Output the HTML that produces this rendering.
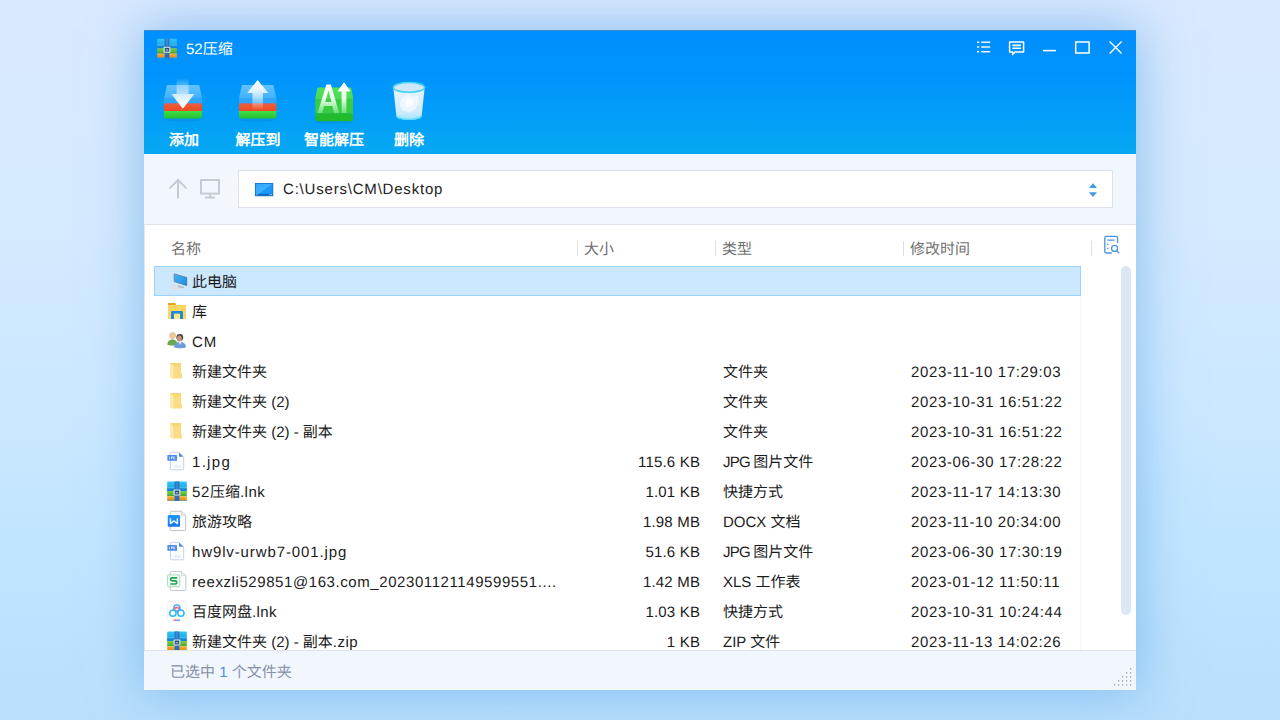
<!DOCTYPE html>
<html lang="zh-CN">
<head>
<meta charset="utf-8">
<title>52压缩</title>
<style>
*{box-sizing:border-box;margin:0;padding:0}
html,body{width:1280px;height:720px;overflow:hidden}
body{font-family:"Liberation Sans",sans-serif;font-size:15px;text-rendering:geometricPrecision;color:#1b1b1b;position:relative;
 background:linear-gradient(180deg,#d9e9fe 0%,#d5eafe 30%,#cbe8ff 55%,#c2e5ff 75%,#b9dffc 100%);}
.abs{position:absolute}
#shadow{position:absolute;left:144px;top:30px;width:992px;height:660px;
 box-shadow:0 0 48px 2px rgba(100,168,234,.66);}
#win{position:absolute;left:144px;top:30px;width:992px;height:660px;background:#fff;overflow:hidden}
#hdr{position:absolute;left:0;top:0;width:992px;height:124px;
 background:linear-gradient(180deg,#008fff 0%,#0093fd 35%,#03a0f6 75%,#06a8f3 100%);box-shadow:inset 0 1px 0 #3a86d0}
#title{position:absolute;left:42px;top:10px;color:#fff;font-size:15px;line-height:20px;white-space:nowrap}
.tb{position:absolute;top:103px;width:90px;text-align:center;color:#fff;font-size:15px;line-height:16px;font-weight:bold;white-space:nowrap}
#addr{position:absolute;left:0;top:124px;width:992px;height:71px;background:#f2f6fd;border-bottom:1px solid #dfe3ea}
#box{position:absolute;left:94px;top:16px;width:875px;height:38px;background:#fff;border:1px solid #dde1ea}
#path{position:absolute;left:44px;top:9px;font-size:15px;line-height:20px;color:#222;white-space:nowrap;letter-spacing:.8px}
#list{position:absolute;left:1px;box-shadow:-1px 0 0 #e3e7ee;top:195px;width:990px;height:426px;background:#fff;overflow:hidden}
.h{position:absolute;top:15px;color:#707070;font-size:15px;line-height:20px;white-space:nowrap}
.sep{position:absolute;top:16px;width:1px;height:15px;background:#e0e0e0}
.row{position:absolute;left:9px;width:927px;height:30px;white-space:nowrap}
.row.sel{background:#cce8ff;border:1px solid #99d1ff}
.n{position:absolute;left:38px;top:7px;line-height:20px;font-size:15px}
.s{position:absolute;right:381px;top:7px;line-height:20px;font-size:15px;text-align:right;letter-spacing:.2px;margin-right:-.2px}
.t{position:absolute;left:569px;top:7px;line-height:20px;font-size:15px}
.d{position:absolute;left:757px;top:7px;line-height:20px;font-size:15px;letter-spacing:.64px}
.sel .n{left:37px;top:6px}
.sel .ic{left:11px;top:3px}
.c{display:inline-block;white-space:nowrap;letter-spacing:0;text-align:justify;text-align-last:justify;text-justify:inter-character}
.ic{position:absolute;left:12px;top:4px;width:22px;height:22px}
#status{position:absolute;left:0;top:620px;width:992px;height:40px;background:#f2f6fd;border-top:1px solid #dfe3ec}
#status span.txt{position:absolute;left:26px;top:12px;font-size:15px;line-height:20px;color:#8491a9;white-space:nowrap}
#status b{font-weight:normal;color:#4a8fe0}
#sb{position:absolute;left:977px;top:236px;width:10px;height:349px;border-radius:5px;background:#dbe7f5}
</style>
</head>
<body>
<svg width="0" height="0" style="position:absolute">
 <defs>
  <linearGradient id="zTop" x1="0" y1="0" x2="0" y2="1"><stop offset="0" stop-color="#35c4f4"/><stop offset=".55" stop-color="#1fb0ea"/><stop offset="1" stop-color="#2a98dc"/></linearGradient>
  <linearGradient id="zGr" x1="0" y1="0" x2="0" y2="1"><stop offset="0" stop-color="#7ccf4a"/><stop offset="1" stop-color="#4aa52e"/></linearGradient>
  <linearGradient id="zOr" x1="0" y1="0" x2="0" y2="1"><stop offset="0" stop-color="#f6b540"/><stop offset="1" stop-color="#e58c12"/></linearGradient>
  <symbol id="zip" viewBox="0 0 20 20">
   <path d="M1.2 0.6h17.6a1 1 0 0 1 1 1V10H0.2V1.6a1 1 0 0 1 1-1z" fill="url(#zTop)"/>
   <rect x="0.2" y="6.4" width="19.6" height="1" fill="#6fd4f4" opacity=".7"/><rect x="0.2" y="7.4" width="19.6" height="2.6" fill="#1480d6" opacity=".88"/>
   <rect x="0.2" y="10" width="19.6" height="5.2" fill="url(#zGr)"/>
   <rect x="0.2" y="15.2" width="19.6" height="4" fill="url(#zOr)"/>
   <rect x="0.2" y="19" width="19.6" height="1" fill="#8f9a86"/>
   <rect x="7.6" y="0.6" width="4.8" height="19.4" fill="#2a6fba"/>
   <rect x="8.6" y="0.6" width="2.8" height="7" fill="#3b86d2"/>
   <rect x="6.6" y="8.4" width="6.8" height="6.2" rx="1" fill="#e9eef2"/>
   <rect x="7.7" y="9.5" width="4.6" height="4" fill="#24508a"/>
   <rect x="8.8" y="11.3" width="2.4" height="1" fill="#c9d6e6"/>
  </symbol>
 </defs>
</svg>
<div id="shadow"></div>
<div id="win">
 <div id="hdr">
  <svg class="abs" style="left:13px;top:8px" width="20" height="21" viewBox="0 0 20 21"><use href="#zip" width="20" height="20.5"/></svg>
  <div id="title">52<span class="c" style="width:30px">压缩</span></div>
  <svg class="abs" style="left:826px;top:6px" width="160" height="26" viewBox="970 36 160 26" fill="none" stroke="#fff" stroke-width="1.5">
   <path d="M977 42.2h2.2M981.2 42.2h9M977 47h2.2M981.2 47h9M977 51.8h2.2M981.2 51.8h9" stroke-width="1.5" opacity=".92"/>
   <path d="M1009.6 42h14v10h-8.6l-2.4 2.6v-2.6h-3z" stroke-linejoin="round"/>
   <path d="M1012.4 45.4h8.6M1012.4 48.2h8.6" stroke-width="1.6"/>
   <path d="M1043 50.6h13"/>
   <rect x="1075.7" y="42" width="13.4" height="11"/>
   <path d="M1109.6 41.6l12 12M1121.6 41.6l-12 12" stroke-width="1.4"/>
  </svg>
  <svg class="abs" style="left:0;top:40px" width="320" height="60" viewBox="144 70 320 60">
   <defs>
    <linearGradient id="lid" x1="0" y1="0" x2="0" y2="1"><stop offset="0" stop-color="#62c3ff"/><stop offset=".6" stop-color="#46b4ff"/><stop offset="1" stop-color="#2ea6fa"/></linearGradient>
    <linearGradient id="red" x1="0" y1="0" x2="0" y2="1"><stop offset="0" stop-color="#c46a70"/><stop offset=".28" stop-color="#f4562c"/><stop offset="1" stop-color="#ea4a28"/></linearGradient>
    <linearGradient id="grn" x1="0" y1="0" x2="0" y2="1"><stop offset="0" stop-color="#3ee045"/><stop offset="1" stop-color="#27bf30"/></linearGradient>
    <linearGradient id="arD" x1="0" y1="0" x2="0" y2="1"><stop offset="0" stop-color="#fff" stop-opacity="0"/><stop offset=".45" stop-color="#e6f5ff" stop-opacity=".6"/><stop offset="1" stop-color="#fff"/></linearGradient>
    <linearGradient id="arU" x1="0" y1="0" x2="0" y2="1"><stop offset="0" stop-color="#fff"/><stop offset=".5" stop-color="#eaf6ff" stop-opacity=".75"/><stop offset="1" stop-color="#fff" stop-opacity=".05"/></linearGradient>
    <linearGradient id="arH" x1="0" y1="0" x2="0" y2="1"><stop offset="0" stop-color="#d8eeff" stop-opacity=".78"/><stop offset=".65" stop-color="#f6fbff" stop-opacity=".97"/><stop offset="1" stop-color="#fff"/></linearGradient><linearGradient id="arH2" x1="0" y1="0" x2="0" y2="1"><stop offset="0" stop-color="#fff"/><stop offset=".5" stop-color="#f4faff" stop-opacity=".95"/><stop offset="1" stop-color="#dcf0ff" stop-opacity=".8"/></linearGradient><linearGradient id="gTop" x1="0" y1="0" x2="0" y2="1"><stop offset="0" stop-color="#52e05c"/><stop offset="1" stop-color="#3fd44a"/></linearGradient>
    <linearGradient id="aiA" x1="0" y1="0" x2="0" y2="1"><stop offset="0" stop-color="#fff"/><stop offset=".55" stop-color="#f4fff4" stop-opacity=".92"/><stop offset="1" stop-color="#d8ffd8" stop-opacity=".35"/></linearGradient>
    <linearGradient id="bin" x1="0" y1="0" x2="0" y2="1"><stop offset="0" stop-color="#f2f9ff" stop-opacity=".95"/><stop offset=".75" stop-color="#e2f1ff" stop-opacity=".92"/><stop offset="1" stop-color="#a6e9fb" stop-opacity=".97"/></linearGradient>
   </defs>
   <!-- add -->
   <ellipse cx="183" cy="119.5" rx="18" ry="2.2" fill="#0a6fd0" opacity=".25"/>
   <path d="M167 85h32.2l2.8 13v5.6h-38v-5.6z" fill="url(#lid)"/>
   <rect x="164" y="98" width="38" height="5.6" fill="#2fa6fb"/>
   <rect x="164" y="103.2" width="38" height="8" fill="url(#red)"/>
   <path d="M164 111h38v5.6a2 2 0 0 1-2 2h-34a2 2 0 0 1-2-2z" fill="url(#grn)"/>
   <path d="M176.6 78h12v16h5.6l-11.4 14.6l-11.2-14.6h5z" fill="url(#arD)"/>
   <path d="M171.6 94h22.6l-11.4 14.6z" fill="url(#arH)"/>
   <!-- extract -->
   <ellipse cx="257.6" cy="119.5" rx="18" ry="2.2" fill="#0a6fd0" opacity=".25"/>
   <path d="M242 85h31.4l2.9 13v5.6h-37.3v-5.6z" fill="url(#lid)"/>
   <rect x="239" y="98" width="37.3" height="5.6" fill="#2fa6fb"/>
   <rect x="239" y="103.2" width="37.3" height="8" fill="url(#red)"/>
   <path d="M239 111h37.3v5.6a2 2 0 0 1-2 2h-33.3a2 2 0 0 1-2-2z" fill="url(#grn)"/>
   <path d="M257.6 80.3l10.6 12.6h-5.2v16.4h-10.6v-16.4h-5.2z" fill="url(#arU)"/>
   <path d="M257.6 80.3l10.6 12.6h-20.8z" fill="url(#arH2)"/>
   <!-- AI -->
   <ellipse cx="334" cy="122" rx="18" ry="2.2" fill="#0a6fd0" opacity=".22"/>
   <path d="M319 87.6h30.6a2 2 0 0 1 1.9 1.4l1.5 8v16.6h-37.5v-16.6l1.6-8a2 2 0 0 1 1.9-1.4z" fill="url(#gTop)"/>
   <rect x="315.5" y="99" width="37.5" height="14.6" fill="#34c840" opacity=".75"/><path d="M315.5 113.4h37.5v5.8a2 2 0 0 1-2 2h-33.5a2 2 0 0 1-2-2z" fill="#22bb2b"/>
   <path d="M326.4 84.6h4.4l8.4 28.4h-5l-1.9-7h-8.2l-1.9 7h-4.6zM328.5 90.5l-3.2 11.4h6.2z" fill="url(#aiA)"/>
   <path d="M344 82.6l6.2 8.6h-3.8v21.8h-4.8v-21.8h-3.8z" fill="url(#aiA)"/>
   <path d="M344 82.6l6.2 8.6h-12.4z" fill="#fff"/>
   <!-- trash -->
   <path d="M393.4 88.2c0 3 31.2 3 31.2 0l-3 28.2c-.3 4.6-24.9 4.6-25.2 0z" fill="url(#bin)"/>
   <path d="M396.2 114.6c.6 5.4 24.6 5.4 25.2 0l-.2 2c-.5 4.4-24.3 4.4-24.8 0z" fill="#59dcf6"/>
   <path d="M401 99l7-4.5 5 2.5 4.5-1.5 2 7-4 6.5-6 3.5-7-2-2.5-6z" fill="#fff" opacity=".55"/>
   <path d="M405 101l5-3 4 3.6-2.6 5.4-5.4.6z" fill="#fff" opacity=".7"/>
   <ellipse cx="409" cy="87.4" rx="15.6" ry="4.9" fill="#cfe6fb" stroke="#3fd3f0" stroke-width="1.6"/>
  </svg>
  <div class="tb" style="left:-5px"><span class="c" style="width:30px">添加</span></div>
  <div class="tb" style="left:69px"><span class="c" style="width:45px">解压到</span></div>
  <div class="tb" style="left:145px"><span class="c" style="width:60px">智能解压</span></div>
  <div class="tb" style="left:220px"><span class="c" style="width:30px">删除</span></div>
 </div>
 <div id="addr">
  <svg class="abs" style="left:16px;top:16px" width="70" height="40" viewBox="160 170 70 40" fill="none" stroke="#c5cad3" stroke-width="2">
   <path d="M178 198.6v-18.2M169.6 188.4l8.4-8.4l8.4 8.4" stroke-linejoin="miter"/>
   <rect x="201" y="180" width="18" height="13.6"/>
   <path d="M210 193.6v3.6M205 197.6h10"/>
  </svg>
  <div id="box"><svg class="abs" style="left:15px;top:11px" width="20" height="16" viewBox="254 182 20 16">
    <defs><linearGradient id="drv" x1="0" y1="0" x2="1" y2="1"><stop offset="0" stop-color="#2aa4ff"/><stop offset=".5" stop-color="#3fb0ff"/><stop offset=".52" stop-color="#1e98fb"/><stop offset="1" stop-color="#1790f6"/></linearGradient></defs>
    <rect x="255.4" y="183.4" width="17.4" height="12.4" fill="url(#drv)" stroke="#0f6fc4" stroke-width=".9"/>
    <rect x="255.9" y="193.9" width="16.4" height="1.6" fill="#0d64b8"/>
    <rect x="256.6" y="194.2" width="1" height="1" fill="#d8ecff"/><rect x="269.4" y="194.2" width="1" height="1" fill="#d8ecff"/><rect x="271" y="194.2" width="1" height="1" fill="#d8ecff"/>
   </svg>
   <svg class="abs" style="left:848px;top:10px" width="12" height="18" viewBox="1087 181 12 18"><path d="M1089 188l4-4.8l4 4.8zM1089 192.2l4 4.8l4-4.8z" fill="#3c9bee"/></svg>
   <div id="path">C:\Users\CM\Desktop</div></div>
 </div>
 <div id="list">
  <div class="h" style="left:26px"><span class="c" style="width:30px">名称</span></div>
  <div class="h" style="left:439px"><span class="c" style="width:30px">大小</span></div>
  <div class="h" style="left:577px"><span class="c" style="width:30px">类型</span></div>
  <div class="h" style="left:765px"><span class="c" style="width:60px">修改时间</span></div>
  <svg class="abs" style="left:957px;top:9px" width="20" height="22" viewBox="1102 234 20 22" fill="none" stroke="#4a93de" stroke-width="1.3">
   <path d="M1117.6 243v-5a1.6 1.6 0 0 0-1.6-1.6h-9.6a1.6 1.6 0 0 0-1.6 1.6v13.4a1.6 1.6 0 0 0 1.6 1.6h5.4"/>
   <path d="M1107.4 240.2h7.2M1107 244.4h1.4M1107 248.4h1.4"/>
   <circle cx="1114.6" cy="248.4" r="3"/><path d="M1116.8 250.8l2.2 2.2"/>
  </svg>
  <div class="sep" style="left:432px"></div><div class="sep" style="left:570px"></div><div class="sep" style="left:758px"></div><div class="sep" style="left:946px"></div>
  <div class="abs" style="left:935px;top:41px;width:1px;height:390px;background:#f5f6f9"></div>
  <div class="row sel" style="top:41px"><svg class="ic" viewBox="0 0 22 22"><defs><linearGradient id="pcg" x1="0" y1="0" x2="1" y2="1"><stop offset="0" stop-color="#4ab4f8"/><stop offset=".5" stop-color="#2ea2f4"/><stop offset="1" stop-color="#1488e4"/></linearGradient></defs>
   <path d="M1.2 16.9l6-1.5l8.6 3.1l-5.8 1.9z" fill="#dcdfe3"/>
   <path d="M11.6 15.2l6.4 1.8v1.3l-6.4-1.2z" fill="#aeb6bf"/>
   <path d="M8.2 3.9l12.5 3.6v8.1l-12.5-4z" fill="url(#pcg)" stroke="#5a6b7c" stroke-width=".7"/></svg><span class="n"><span class="c" style="width:45px">此电脑</span></span></div>
  <div class="row" style="top:71px"><svg class="ic" viewBox="0 0 22 22"><path d="M2 3h7.2l1 2.2H2z" fill="#e6a417"/><rect x="2" y="5" width="18" height="14" fill="#fcd462"/><path d="M5 19v-6.6a1.4 1.4 0 0 1 1.4-1.4h9.2a1.4 1.4 0 0 1 1.4 1.4V19h-3v-5.2H8V19z" fill="#2089d8"/><rect x="8" y="13.8" width="6" height="5.2" fill="#fde68c"/></svg><span class="n"><span class="c" style="width:15px">库</span></span></div>
  <div class="row" style="top:101px"><svg class="ic" viewBox="0 0.9 22 22">
   <path d="M1.4 15.6c0-3.4 2.2-5.2 5-5.2s5 1.8 5 5.2c-2 1.1-8 1.1-10 0z" fill="#6aa84f"/>
   <circle cx="6.6" cy="6.4" r="3.3" fill="#dccb8e"/><ellipse cx="6.8" cy="7.2" rx="2.2" ry="2.7" fill="#ecc7a6"/>
   <path d="M8 18.2c0-3.6 2.6-5.4 6-5.4s6 1.8 6 5.4c-2.4 1.3-9.6 1.3-12 0z" fill="#6b9fd8"/>
   <path d="M12.8 13l1.2 3l1.4-3z" fill="#e8f0fa"/>
   <circle cx="13.8" cy="8.4" r="3.4" fill="#4b4140"/><ellipse cx="13.4" cy="9.4" rx="2.4" ry="2.9" fill="#c49478"/></svg><span class="n" style="letter-spacing:.9px">CM</span></div>
  <div class="row" style="top:131px"><svg class="ic" viewBox="0 0 22 22"><path d="M4 3h11v10.4l1 1v3.8H6.4L4 17z" fill="#f7d673"/><path d="M7.4 6.4h7.6v7l1 1v3.8H7.4z" fill="#f9dc84"/><path d="M4 3l3.6 3.2v13.4L4 17z" fill="#fceab0"/></svg><span class="n"><span class="c" style="width:75px">新建文件夹</span></span><span class="t"><span class="c" style="width:45px">文件夹</span></span><span class="d">2023-11-10 17:29:03</span></div>
  <div class="row" style="top:161px"><svg class="ic" viewBox="0 0 22 22"><path d="M4 3h11v10.4l1 1v3.8H6.4L4 17z" fill="#f7d673"/><path d="M7.4 6.4h7.6v7l1 1v3.8H7.4z" fill="#f9dc84"/><path d="M4 3l3.6 3.2v13.4L4 17z" fill="#fceab0"/></svg><span class="n"><span class="c" style="width:75px">新建文件夹</span> (2)</span><span class="t"><span class="c" style="width:45px">文件夹</span></span><span class="d">2023-10-31 16:51:22</span></div>
  <div class="row" style="top:191px"><svg class="ic" viewBox="0 0 22 22"><path d="M4 3h11v10.4l1 1v3.8H6.4L4 17z" fill="#f7d673"/><path d="M7.4 6.4h7.6v7l1 1v3.8H7.4z" fill="#f9dc84"/><path d="M4 3l3.6 3.2v13.4L4 17z" fill="#fceab0"/></svg><span class="n"><span class="c" style="width:75px">新建文件夹</span> (2) - <span class="c" style="width:30px">副本</span></span><span class="t"><span class="c" style="width:45px">文件夹</span></span><span class="d">2023-10-31 16:51:22</span></div>
  <div class="row" style="top:221px"><svg class="ic" viewBox="0 0 22 22"><path d="M5.4 2.3h7.8l4.5 4.5v12a1 1 0 0 1-1 1H5.4a1 1 0 0 1-1-1V3.3a1 1 0 0 1 1-1z" fill="#fbfdff" stroke="#bccbe8" stroke-width=".9"/><path d="M13 2.6l4.2 4.2H13z" fill="#4a8ae8"/><path d="M7 17.6l3-3.6l2 2.2l1.6-1.6l2 3z" fill="#e3ebfa"/><rect x="8.6" y="11.2" width="1.8" height=".8" fill="#dfe8f8"/><rect x="1.4" y="5" width="9.6" height="5.8" rx=".6" fill="#4d8be6"/><path d="M3.4 6.6v2.2h.9M5.5 8.9V6.7h1.2v1.1H5.5M8.6 6.7H7.6v2.2h1.1V7.9H8.2" stroke="#dfeaff" stroke-width=".7" fill="none"/></svg><span class="n" style="letter-spacing:1.3px">1.jpg</span><span class="s">115.6 KB</span><span class="t"><span style="letter-spacing:-.8px">JPG </span><span class="c" style="width:60px">图片文件</span></span><span class="d">2023-06-30 17:28:22</span></div>
  <div class="row" style="top:251px"><svg class="ic" viewBox="0 0 22 22"><use href="#zip" x="1" y="1" width="20" height="20"/></svg><span class="n"><span style="letter-spacing:.6px">52</span><span class="c" style="width:30px">压缩</span><span style="letter-spacing:.5px">.lnk</span></span><span class="s">1.01 KB</span><span class="t"><span class="c" style="width:60px">快捷方式</span></span><span class="d">2023-11-17 14:13:30</span></div>
  <div class="row" style="top:281px"><svg class="ic" viewBox="0 0 22 22"><defs><linearGradient id="wpg" x1="0" y1="0" x2="0" y2="1"><stop offset="0" stop-color="#2196ff"/><stop offset="1" stop-color="#1572f2"/></linearGradient></defs><path d="M5.2 1.3h10.2l4.3 3.9v14.4a1 1 0 0 1-1 1H5.2a1 1 0 0 1-1-1V2.3a1 1 0 0 1 1-1z" fill="#fafcff" stroke="#bcc2cc" stroke-width="1"/><path d="M15.4 1.5v3.7h4.1" fill="#eef1f6" stroke="#c5cad3" stroke-width=".8"/><rect x="1.75" y="5" width="12.3" height="11.8" rx="1.2" fill="url(#wpg)"/><path d="M4.4 8.2v5.4l3.5-2.7l3.5 2.7V8.2" fill="none" stroke="#e8f6ff" stroke-width="1.5" stroke-linejoin="round"/></svg><span class="n"><span class="c" style="width:60px">旅游攻略</span></span><span class="s">1.98 MB</span><span class="t">DOCX <span class="c" style="width:30px">文档</span></span><span class="d">2023-11-10 20:34:00</span></div>
  <div class="row" style="top:311px"><svg class="ic" viewBox="0 0 22 22"><path d="M5.4 2.3h7.8l4.5 4.5v12a1 1 0 0 1-1 1H5.4a1 1 0 0 1-1-1V3.3a1 1 0 0 1 1-1z" fill="#fbfdff" stroke="#bccbe8" stroke-width=".9"/><path d="M13 2.6l4.2 4.2H13z" fill="#4a8ae8"/><path d="M7 17.6l3-3.6l2 2.2l1.6-1.6l2 3z" fill="#e3ebfa"/><rect x="8.6" y="11.2" width="1.8" height=".8" fill="#dfe8f8"/><rect x="1.4" y="5" width="9.6" height="5.8" rx=".6" fill="#4d8be6"/><path d="M3.4 6.6v2.2h.9M5.5 8.9V6.7h1.2v1.1H5.5M8.6 6.7H7.6v2.2h1.1V7.9H8.2" stroke="#dfeaff" stroke-width=".7" fill="none"/></svg><span class="n" style="letter-spacing:.88px">hw9lv-urwb7-001.jpg</span><span class="s">51.6 KB</span><span class="t"><span style="letter-spacing:-.8px">JPG </span><span class="c" style="width:60px">图片文件</span></span><span class="d">2023-06-30 17:30:19</span></div>
  <div class="row" style="top:341px"><svg class="ic" viewBox="0 0 22 22"><path d="M5.3 1.4h10.2l4.3 3.9v14.3a1 1 0 0 1-1 1H5.3a1 1 0 0 1-1-1V2.4a1 1 0 0 1 1-1z" fill="#fcfdfe" stroke="#c2c6cf" stroke-width="1"/><path d="M15.4 1.6v3.7h4.1" fill="#f2f4f7" stroke="#c8ccd4" stroke-width=".8"/><rect x="1.6" y="4.9" width="12.2" height="11.8" rx="1.2" fill="#f6fcf8" stroke="#a5d8b8" stroke-width="1"/><path d="M11.2 7.8H6.2a1.55 1.55 0 0 0 0 3.1h3a1.55 1.55 0 0 1 0 3.1H4.2" fill="none" stroke="#17a650" stroke-width="1.7"/></svg><span class="n" style="letter-spacing:.58px">reexzli529851@163.com_202301121149599551....</span><span class="s">1.42 MB</span><span class="t">XLS <span class="c" style="width:45px">工作表</span></span><span class="d">2023-01-12 11:50:11</span></div>
  <div class="row" style="top:371px"><svg class="ic" viewBox="0 0 22 22"><rect x="1.4" y="1.4" width="19.2" height="19.6" rx="2.4" fill="#fff" stroke="#efefef" stroke-width=".8"/><circle cx="10.9" cy="8" r="3.1" fill="#fbe3e9" stroke="#35aaf6" stroke-width="1.4"/><path d="M8.4 9.2a2.7 2.7 0 0 1 5 0a3 3 0 0 1-1.2 2.3a2.3 2.3 0 0 1-2.6 0a3 3 0 0 1-1.2-2.3z" fill="none" stroke="#ef4f6b" stroke-width="1.3" opacity=".85"/><circle cx="6.9" cy="13.2" r="3.1" fill="#fff" stroke="#2cb8fb" stroke-width="1.5"/><circle cx="14.9" cy="13.2" r="3.1" fill="#fff" stroke="#2cb8fb" stroke-width="1.5"/><rect x="7.6" y="19.6" width="3.4" height="1.2" rx=".5" fill="#f0495c"/><rect x="11" y="19.6" width="3" height="1.2" rx=".5" fill="#2a8af0"/></svg><span class="n"><span class="c" style="width:60px">百度网盘</span><span style="letter-spacing:.4px">.lnk</span></span><span class="s">1.03 KB</span><span class="t"><span class="c" style="width:60px">快捷方式</span></span><span class="d">2023-10-31 10:24:44</span></div>
  <div class="row" style="top:401px"><svg class="ic" viewBox="0 0 22 22"><use href="#zip" x="1" y="1" width="20" height="20"/></svg><span class="n"><span class="c" style="width:75px">新建文件夹</span> (2) - <span class="c" style="width:30px">副本</span><span style="letter-spacing:.5px">.zip</span></span><span class="s">1 KB</span><span class="t">ZIP <span class="c" style="width:30px">文件</span></span><span class="d">2023-11-13 14:02:26</span></div>
 </div>
 <div id="sb"></div>
 <div id="status"><svg class="abs" style="left:968px;top:15px" width="20" height="20" viewBox="1112 666 20 20" fill="#8e9298"><rect x="1130" y="668.3" width="1.2" height="1.2"/><rect x="1130" y="672.3" width="1.2" height="1.2"/><rect x="1126" y="672.3" width="1.2" height="1.2"/><rect x="1130" y="676.3" width="1.2" height="1.2"/><rect x="1126" y="676.3" width="1.2" height="1.2"/><rect x="1122" y="676.3" width="1.2" height="1.2"/><rect x="1130" y="680.3" width="1.2" height="1.2"/><rect x="1126" y="680.3" width="1.2" height="1.2"/><rect x="1122" y="680.3" width="1.2" height="1.2"/><rect x="1118" y="680.3" width="1.2" height="1.2"/><rect x="1130" y="684.3" width="1.2" height="1.2"/><rect x="1126" y="684.3" width="1.2" height="1.2"/><rect x="1122" y="684.3" width="1.2" height="1.2"/><rect x="1118" y="684.3" width="1.2" height="1.2"/><rect x="1114" y="684.3" width="1.2" height="1.2"/></svg><span class="txt"><span class="c" style="width:45px">已选中</span> <b>1</b> <span class="c" style="width:60px">个文件夹</span></span></div>
</div>
</body>
</html>
